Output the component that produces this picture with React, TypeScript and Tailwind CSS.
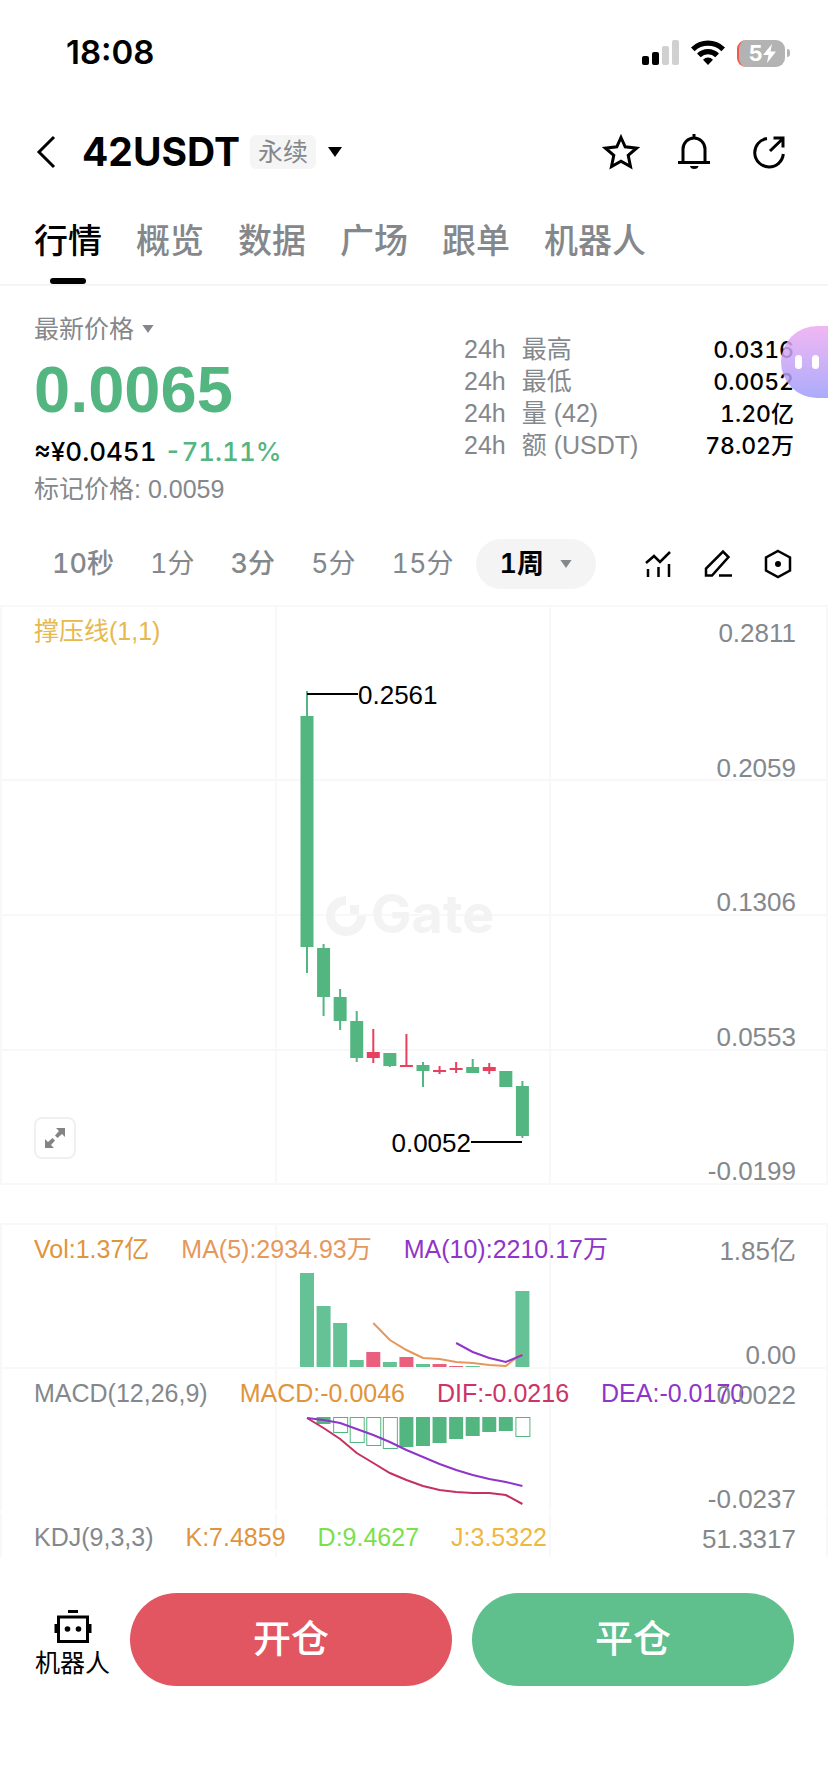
import type { ReactNode } from 'react'
import clsx from 'clsx'

const UP = '#e8415f'
const DOWN = '#53b681'

const tabs = ['行情', '概览', '数据', '广场', '跟单', '机器人']

const stats = [
  { label: '最高', value: '0.0316' },
  { label: '最低', value: '0.0052' },
  { label: '量 (42)', value: '1.20亿' },
  { label: '额 (USDT)', value: '78.02万' },
]

const intervals = [
  { label: '10秒', strong: true },
  { label: '1分' },
  { label: '3分', strong: true },
  { label: '5分' },
  { label: '15分' },
]

// x of the n-th candle on the 828 wide canvas
const cx = (i: number) => 307 + i * 16.57

// [high, top of body, bottom of body, low, rising]
const candles: [number, number, number, number, boolean][] = [
  [84, 109, 340, 366, false],
  [337, 341, 390, 409, false],
  [382, 390, 414, 423, false],
  [404, 414, 451, 455, false],
  [422, 445, 451, 456, true],
  [446, 446, 459, 460, false],
  [427, 458, 460, 460, true],
  [455, 458, 464, 480, false],
  [459, 463, 465, 467, true],
  [455, 461, 463, 466, true],
  [452, 460, 466, 466, false],
  [456, 460, 464, 467, true],
  [464, 464, 480, 480, false],
  [474, 479, 529, 531, false],
]

const volumes = [94, 61, 44, 7, 15, 5, 10, 3, 3, 1, 1, 0, 0, 76]
const ma5 = [98, 115, 125, 133, 134, 137, 138, 140, 141, 128]
const ma10 = [118, 127, 133, 137, 130]

const macd = [0, 7, 15, 25, 28, 31, 30, 29, 26, 22, 19, 15, 14, 19]
const hollow = [2, 3, 4, 5, 13]
const dif = [49, 59, 70, 84, 94, 104, 111, 117, 121, 123, 124, 124, 126, 135]
const dea = [49, 51, 54, 60, 66, 73, 81, 88, 95, 101, 106, 110, 113, 117]

const line = (ys: number[], start = 0) => ys.map((y, i) => `${cx(i + start)},${y}`).join(' ')

function Caret({ className }: { className?: string }) {
  return (
    <svg viewBox="0 0 14 10" className={className} fill="currentColor" aria-hidden="true">
      <path d="M0 0h14L7 10z" />
    </svg>
  )
}

function StatusBar() {
  return (
    <div className="flex h-[106px] items-center justify-between pl-[66px] pr-[38px] font-[Inter,sans-serif]">
      <span className="text-[33px] font-semibold">18:08</span>
      <div className="flex items-center gap-3">
        <svg width="37" height="26" viewBox="0 0 37 26">
          <rect x="0" y="16" width="7" height="9" rx="2" />
          <rect x="10" y="12" width="7" height="13" rx="2" />
          <rect x="20" y="6" width="7" height="19" rx="2" fill="#d0d0d0" />
          <rect x="30" y="0" width="7" height="25" rx="2" fill="#d0d0d0" />
        </svg>
        <svg width="34" height="26" viewBox="0 0 34 26">
          <path d="M0 7.500a24 24 0 0 1 34 0l-3.600 3.700a19 19 0 0 0-26.800 0z" />
          <path d="M6 13.600a15.600 15.600 0 0 1 22 0l-3.700 3.700a10.400 10.400 0 0 0-14.600 0z" />
          <path d="M12 19.700a7 7 0 0 1 10 0l-5 5.300z" />
        </svg>
        <div className="flex items-center gap-[2px]">
          <div className="flex h-[27px] w-12 items-center justify-center rounded-[9px] border-l-2 border-[#ef5a4c] bg-[#b3b3b3] text-white">
            <span className="text-[22px] font-bold leading-none">5</span>
            <svg width="13" height="19" viewBox="0 0 13 19" fill="currentColor">
              <path d="M9 0 0 11h5.500L4 19l9-11.500H7.500z" />
            </svg>
          </div>
          <span className="h-2 w-[3px] rounded-r bg-[#b3b3b3]" />
        </div>
      </div>
    </div>
  )
}

function Header() {
  return (
    <header className="flex h-[92px] items-center pl-9 pr-[42px]">
      <button aria-label="返回">
        <svg width="20" height="34" viewBox="0 0 20 34" fill="none" stroke="currentColor" strokeWidth="3">
          <path d="M18 2 3 17l15 15" />
        </svg>
      </button>
      <h1 className="ml-[26px] font-[Inter,sans-serif] text-[39px] font-bold">42USDT</h1>
      <span className="ml-[10px] rounded-md bg-[#f5f5f5] px-2 text-[25px] leading-[34px] text-[#84888c]">永续</span>
      <button aria-label="切换合约" className="ml-3">
        <Caret className="h-[10px] w-[14px]" />
      </button>
      <div className="ml-auto flex items-center gap-9">
        <button aria-label="收藏">
          <svg width="38" height="38" viewBox="0 0 38 38" fill="none" stroke="currentColor" strokeWidth="3">
            <path d="M19 4.500 23.200 13.800 34.500 15.200 26.200 22.300 28.500 33.500 19 28.200 9.500 33.500 11.800 22.300 3.500 15.200 14.800 13.800z" />
          </svg>
        </button>
        <button aria-label="提醒">
          <svg width="36" height="38" viewBox="0 0 36 38" fill="none" stroke="currentColor" strokeWidth="3">
            <path d="M18 1v4M7 29V16a11 11 0 0 1 22 0v13M2 29.500h32" />
            <path d="M14 33h8.500a4.300 3.500 0 0 1-8.500 0z" fill="currentColor" stroke="none" />
          </svg>
        </button>
        <button aria-label="分享" className="ml-1">
          <svg width="34" height="38" viewBox="0 0 34 38" fill="none" stroke="currentColor" strokeWidth="3">
            <path d="M15 5.500A14.300 14.300 0 1 0 31.300 21M18 18 31 5.500M21.500 5h9.500v9.500" />
          </svg>
        </button>
      </div>
    </header>
  )
}

function PriceSummary() {
  return (
    <section className="flex justify-between pl-[34px] pr-[34px] pt-[27px]">
      <div>
        <button className="flex items-center gap-2 text-[25px] leading-8 text-[#84888c]">
          最新价格
          <Caret className="h-2 w-3" />
        </button>
        <div className="mt-[13px] text-[65px] font-bold leading-[64px] text-[#53b681]">0.0065</div>
        <div className="mt-[10px] flex gap-2 font-[Inter,sans-serif] text-[26px] font-medium leading-10 tabular-nums">
          <span>≈¥0.0451</span>
          <span className="text-[#53b681]">-71.11%</span>
        </div>
        <div className="mt-px text-[25px] leading-8 text-[#84888c]">标记价格: 0.0059</div>
      </div>
      <dl className="mt-[21px] w-[330px] text-[25px]">
        {stats.map((s) => (
          <div key={s.label} className="flex h-8 items-center">
            <dt className="flex gap-4 text-[#84888c]">
              <span>24h</span>
              <span>{s.label}</span>
            </dt>
            <dd className="ml-auto font-[Inter,'Noto_Sans_CJK_SC',sans-serif] text-[23px] font-medium tabular-nums">
              {s.value}
            </dd>
          </div>
        ))}
      </dl>
    </section>
  )
}

function IntervalBar() {
  return (
    <div className="mt-[34px] flex h-[50px] items-center pl-[52px] pr-9 font-[Inter,'Noto_Sans_CJK_SC',sans-serif] text-[27px] tabular-nums text-[#84888c]">
      <div className="flex gap-9">
        {intervals.map((it) => (
          <button key={it.label} className={clsx(it.strong && 'font-medium')}>
            {it.label}
          </button>
        ))}
      </div>
      <button className="ml-[22px] flex h-[50px] items-center gap-4 rounded-full bg-[#f4f4f4] px-6 font-semibold text-black">
        1周
        <Caret className="h-2 w-3 text-[#84888c]" />
      </button>
      <div className="ml-auto flex gap-8 text-black">
        <button aria-label="指标">
          <svg width="28" height="30" viewBox="0 0 28 30" fill="none" stroke="currentColor" strokeWidth="2.500">
            <path d="M2 14l8-7 6 6L26 3M4 20v8M14.500 18v10M25 15v13" />
          </svg>
        </button>
        <button aria-label="画线">
          <svg width="28" height="30" viewBox="0 0 28 30" fill="none" stroke="currentColor" strokeWidth="2.500">
            <path d="M2 26.500v-7L19 2.500l5.500 5.500L8 26.500zM15 26.500h13" />
          </svg>
        </button>
        <button aria-label="设置">
          <svg width="28" height="30" viewBox="0 0 28 30" fill="none" stroke="currentColor" strokeWidth="2.500">
            <path d="M14 2 26 8.500v13L14 28 2 21.500v-13z" />
            <circle cx="14" cy="15" r="3" fill="currentColor" stroke="none" />
          </svg>
        </button>
      </div>
    </div>
  )
}

type PanelProps = {
  className: string
  legend: ReactNode
  axis: string[]
  children?: ReactNode
}

function Panel({ className, legend, axis, children }: PanelProps) {
  return (
    <section className={clsx('relative text-[25px] leading-8', className)}>
      <div className="absolute inset-0 grid grid-cols-3 divide-x-2 divide-[#f8f8f8] border-x-2 border-[#f8f8f8]">
        <div />
        <div />
        <div />
      </div>
      {children}
      <div className="relative flex gap-8 whitespace-nowrap pl-[34px] pt-2">{legend}</div>
      <div className="absolute -bottom-1 right-0 top-0 flex flex-col justify-between pr-8 pt-[10px] text-right text-[26px] text-[#84888c]">
        {axis.map((a) => (
          <span key={a}>{a}</span>
        ))}
      </div>
    </section>
  )
}

function PriceChart() {
  return (
    <Panel
      className="mt-4 h-[580px] border-y-2 border-[#f8f8f8]"
      legend={<span className="text-[#e6b94e]">撑压线(1,1)</span>}
      axis={['0.2811', '0.2059', '0.1306', '0.0553', '-0.0199']}
    >
      <div className="absolute inset-0 flex flex-col">
        <div className="h-[174px] border-b-2 border-[#f8f8f8]" />
        <div className="h-[135px] border-b-2 border-[#f8f8f8]" />
        <div className="h-[135px] border-b-2 border-[#f8f8f8]" />
      </div>
      <svg className="absolute inset-0 h-full w-full" viewBox="0 0 828 576">
        <g fill="#f3f3f3">
          <path d="M346 289a20 20 0 1 0 20 20h-9a11 11 0 1 1-11-11z" />
          <path d="M350 298h9v9h-9z" />
          <text x="371" y="326" className="font-[Inter,sans-serif] text-[54px] font-bold">Gate</text>
        </g>
        {candles.map(([high, top, bottom, low, rising], i) => (
          <g key={i} fill={rising ? UP : DOWN}>
            <rect x={cx(i) - 1} y={high} width="2" height={low - high} />
            <rect x={cx(i) - 6.5} y={top} width="13" height={bottom - top} />
          </g>
        ))}
        <path d="M307 87h51M471 535h51" stroke="#000" strokeWidth="2" />
        <text x="358" y="97" className="text-[26px]">0.2561</text>
        <text x="471" y="545" textAnchor="end" className="text-[26px]">0.0052</text>
      </svg>
      <button
        aria-label="全屏"
        className="absolute bottom-6 left-[34px] flex h-[42px] w-[42px] items-center justify-center rounded-lg border-2 border-[#f0f0f0] bg-white text-[#848484]"
      >
        <svg width="20" height="20" viewBox="0 0 20 20" fill="currentColor">
          <path d="M11 0h9v9l-3-3-4.500 4L10 7.500 14 3zM9 20H0v-9l3 3 4.500-4L10 12.500 6 17z" />
        </svg>
      </button>
    </Panel>
  )
}

function VolumeChart() {
  return (
    <Panel
      className="mt-[38px] h-36 border-t-2 border-[#f8f8f8]"
      legend={
        <>
          <span className="text-[#e0943c]">Vol:1.37亿</span>
          <span className="text-[#e6975c]">MA(5):2934.93万</span>
          <span className="text-[#8f35c9]">MA(10):2210.17万</span>
        </>
      }
      axis={['1.85亿', '0.00']}
    >
      <svg className="absolute inset-0 h-full w-full" viewBox="0 0 828 142" fill="none" strokeWidth="2">
        {volumes.map((v, i) => (
          <rect key={i} x={cx(i) - 7} y={142 - v} width="14" height={v} fill={candles[i][4] ? '#ea5f7d' : '#65c296'} />
        ))}
        <polyline points={line(ma5, 4)} stroke="#e6975c" />
        <polyline points={line(ma10, 9)} stroke="#8f35c9" />
      </svg>
    </Panel>
  )
}

function MacdChart() {
  return (
    <Panel
      className="h-36 border-t-2 border-[#f8f8f8]"
      legend={
        <>
          <span className="text-[#84888c]">MACD(12,26,9)</span>
          <span className="text-[#e0943c]">MACD:-0.0046</span>
          <span className="text-[#cc3366]">DIF:-0.0216</span>
          <span className="text-[#8f35c9]">DEA:-0.0170</span>
        </>
      }
      axis={['0.0022', '-0.0237']}
    >
      <svg className="absolute inset-0 h-full w-full" viewBox="0 0 828 142" fill="none" strokeWidth="2">
        {macd.map((v, i) =>
          hollow.includes(i) ? (
            <rect key={i} x={cx(i) - 6.5} y="48.500" width="14" height={v} stroke={DOWN} strokeWidth="1" />
          ) : (
            <rect key={i} x={cx(i) - 7} y="48" width="14" height={v} fill={DOWN} />
          ),
        )}
        <polyline points={line(dif)} stroke="#c4305f" />
        <polyline points={line(dea)} stroke="#8f35c9" />
      </svg>
    </Panel>
  )
}

function ActionBar() {
  return (
    <footer className="flex items-center gap-5 pb-[106px] pl-[35px] pr-[34px] pt-9">
      <button className="flex flex-col items-center pt-2 text-[25px] leading-8">
        <svg width="38" height="34" viewBox="0 0 38 34" fill="none" stroke="currentColor" strokeWidth="3">
          <path d="M14 2.500h10M4.500 8h29v24.500h-29zM2 15v9M36 15v9" />
          <circle cx="13.500" cy="20" r="2.800" fill="currentColor" stroke="none" />
          <circle cx="24.500" cy="20" r="2.800" fill="currentColor" stroke="none" />
        </svg>
        <span className="mt-1">机器人</span>
      </button>
      <button className="h-[93px] flex-1 rounded-full bg-[#e25662] text-[38px] font-medium text-white">开仓</button>
      <button className="h-[93px] flex-1 rounded-full bg-[#5fbf8d] text-[38px] font-medium text-white">平仓</button>
    </footer>
  )
}

export default function App() {
  return (
    <div className="relative overflow-hidden bg-white font-['Liberation_Sans','Noto_Sans_CJK_SC',sans-serif] text-black">
      <StatusBar />
      <Header />
      <nav className="flex h-[88px] items-center gap-[34px] border-b-2 border-[#f5f5f5] pl-[34px]">
        {tabs.map((t, i) => (
          <a
            key={t}
            href="#"
            className={clsx('relative flex h-full items-center text-[34px] font-medium', i > 0 && 'text-[#84888c]')}
          >
            {t}
            {i === 0 && <span className="absolute bottom-0 left-4 right-4 h-[6px] rounded-full bg-black" />}
          </a>
        ))}
      </nav>
      <main>
        <PriceSummary />
        <IntervalBar />
        <PriceChart />
        <VolumeChart />
        <MacdChart />
        <Panel
          className="h-[46px] border-t-2 border-transparent"
          legend={
            <>
              <span className="text-[#84888c]">KDJ(9,3,3)</span>
              <span className="text-[#e0943c]">K:7.4859</span>
              <span className="text-[#7be04a]">D:9.4627</span>
              <span className="text-[#efb73e]">J:3.5322</span>
            </>
          }
          axis={['51.3317']}
        />
      </main>
      <ActionBar />
      <button
        aria-label="助手"
        className="absolute right-0 top-[326px] flex h-[72px] w-[47px] items-center gap-[10px] rounded-l-[36px] bg-linear-to-b from-[#eeaaf0]/85 to-[#9c9cfa]/85 pl-[14px]"
      >
        <span className="h-[14px] w-[7px] rounded-full bg-white" />
        <span className="h-[14px] w-[7px] rounded-full bg-white" />
      </button>
    </div>
  )
}
